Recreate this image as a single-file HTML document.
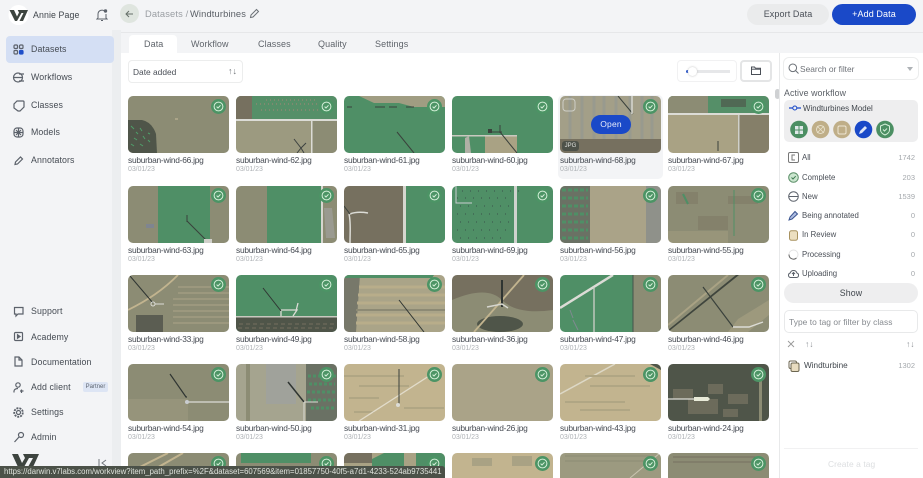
<!DOCTYPE html>
<html><head><meta charset="utf-8"><style>
*{box-sizing:border-box}
html,body{margin:0;padding:0;width:923px;height:478px;overflow:hidden;background:#f3f4f6;font-family:"Liberation Sans",sans-serif;color:#4a4f57}
#w{position:relative;width:923px;height:478px;overflow:hidden;background:#f3f4f6;filter:blur(.25px)}
.a{position:absolute}
.nav{position:absolute;left:31px;font-size:8.800px;color:#454b53;letter-spacing:.1px;white-space:nowrap}
.ic{position:absolute;left:12px;width:13px;height:13px;fill:none;stroke:#5c626b;stroke-width:1.2}
.th{position:absolute;width:101px;height:57px;border-radius:5px;overflow:hidden}
.th svg{display:block}
.r5{height:25px;border-radius:5px 5px 0 0}
.n{position:absolute;font-size:8.400px;letter-spacing:-.25px;color:#454a52;white-space:nowrap}
.d{position:absolute;font-size:7px;letter-spacing:-.05px;color:#aeb2b6;white-space:nowrap}
.b{position:absolute;width:15px;height:15px}
.tab{position:absolute;top:39px;font-size:9px;color:#5f646b;letter-spacing:.1px}
.st{position:absolute;left:802px;font-size:7.800px;color:#4a4f57;white-space:nowrap}
.ct{position:absolute;right:8px;font-size:7.500px;color:#a4a8ac}
.si{position:absolute;left:788px;width:11px;height:11px;fill:none;stroke:#5c626b;stroke-width:1}
</style></head><body><div id="w">
<svg width="0" height="0" style="position:absolute"><defs>
<g id="ck"><circle cx="7.500" cy="7.500" r="7.500" fill="#4c9465"/><circle cx="7.500" cy="7.500" r="4.400" fill="none" stroke="#d5efd9" stroke-width="1"/><path d="M5.600 7.600l1.400 1.400 2.500-2.700" fill="none" stroke="#d5efd9" stroke-width="1"/></g>
</defs></svg>

<!-- sidebar -->
<div class="a" style="left:112px;top:0;width:9px;height:478px;background:#eceef0"></div>
<div class="a" style="left:112px;top:0;width:9px;height:30px;background:#f3f4f6"></div>
<svg class="a" style="left:8px;top:5px" width="21" height="20" viewBox="0 0 21 20"><circle cx="10.500" cy="10" r="10" fill="#fff"/><path d="M1.500 5h4.500l3 6.500 2-4-1.300-2.500H20l-5 11h-3.500l4-8h-2l-4.500 8H7z" fill="#3d443f"/></svg>
<div class="a" style="left:33px;top:10px;font-size:8.800px;color:#40464c;letter-spacing:.1px">Annie Page</div>
<svg class="a" style="left:96px;top:8px" width="12" height="14" viewBox="0 0 12 14" fill="none" stroke="#5c626b" stroke-width="1"><path d="M2 10V6a4 4 0 0 1 7-2.500M10 6v4l1 1H1l1-1M5 12.500h2"/><circle cx="9.500" cy="3" r="1.200" fill="#5c626b"/></svg>
<div class="a" style="left:6px;top:36px;width:108px;height:27px;background:#d4dff4;border-radius:4px"></div>
<svg class="ic" style="top:43px" viewBox="0 0 13 13"><rect x="2" y="2" width="3.500" height="3.500" rx="1"/><rect x="7.500" y="2" width="3.500" height="3.500" rx="1"/><rect x="2" y="7.500" width="3.500" height="3.500" rx="1"/><rect x="7.500" y="7.500" width="3.500" height="3.500" rx="1" fill="#1f4fc9" stroke="#1f4fc9"/></svg>
<div class="nav" style="top:44px">Datasets</div>
<svg class="ic" style="top:71px" viewBox="0 0 13 13"><circle cx="6" cy="6.500" r="4.500"/><path d="M1 6.500h10M7 3h5M7 10h5"/></svg>
<div class="nav" style="top:72px">Workflows</div>
<svg class="ic" style="top:99px" viewBox="0 0 13 13"><path d="M5 2h6a1 1 0 0 1 1 1v5l-4 4H6L2 9V5z"/></svg>
<div class="nav" style="top:100px">Classes</div>
<svg class="ic" style="top:126px" viewBox="0 0 13 13"><rect x="2" y="2" width="9" height="9" rx="3"/><path d="M2 6.500h9M6.500 2v9M4 4l5 5M9 4l-5 5"/></svg>
<div class="nav" style="top:127px">Models</div>
<svg class="ic" style="top:154px" viewBox="0 0 13 13"><path d="M3 10.500l.5-2.500 5-5 2 2-5 5z"/></svg>
<div class="nav" style="top:155px">Annotators</div>
<svg class="ic" style="top:305px" viewBox="0 0 13 13"><path d="M2.500 2.500h8.500v6.500H6L4 11V9H2.500z"/></svg>
<div class="nav" style="top:306px">Support</div>
<svg class="ic" style="top:330px" viewBox="0 0 13 13"><rect x="2.500" y="2.500" width="8" height="8" rx="1"/><path d="M5.500 4.800l2.500 1.700-2.500 1.700z" fill="#5c626b"/></svg>
<div class="nav" style="top:332px">Academy</div>
<svg class="ic" style="top:355px" viewBox="0 0 13 13"><path d="M3 2h4l3 3v6H3z"/><path d="M7 2v3h3"/></svg>
<div class="nav" style="top:357px">Documentation</div>
<svg class="ic" style="top:381px" viewBox="0 0 13 13"><circle cx="6" cy="4" r="2.200"/><path d="M2 11.500V10c0-1.500 2-2.500 4-2.500M9.500 8.500v3.500M8 10h3.500"/></svg>
<div class="nav" style="top:382px">Add client</div>
<div class="a" style="left:83px;top:382px;width:25px;height:10px;border-radius:2px;background:#dde5f4;font-size:6px;color:#5d6570;text-align:center;line-height:10px">Partner</div>
<svg class="ic" style="top:406px" viewBox="0 0 13 13"><circle cx="6.500" cy="6.500" r="2"/><circle cx="6.500" cy="6.500" r="4.300" stroke-dasharray="2 1" stroke-width="1.800"/></svg>
<div class="nav" style="top:407px">Settings</div>
<svg class="ic" style="top:431px" viewBox="0 0 13 13"><circle cx="9" cy="4" r="2.500"/><path d="M7 6l-4.500 5"/></svg>
<div class="nav" style="top:432px">Admin</div>
<svg class="a" style="left:12px;top:454px" width="27" height="13" viewBox="0 0 27 13"><path d="M0 0h6l4 9 3-5-2-4h16l-6 13h-5l5-9h-4l-5 9H6z" fill="#3d443f"/></svg>
<svg class="a" style="left:97px;top:459px" width="11" height="8" viewBox="0 0 11 8" fill="none" stroke="#71767c" stroke-width="1"><path d="M2 0v8M9 1L5 4l4 3"/></svg>

<!-- header -->
<div class="a" style="left:120px;top:4px;width:19px;height:19px;border-radius:50%;background:#dfe5df"></div>
<svg class="a" style="left:125px;top:10px" width="9" height="8" viewBox="0 0 9 8" fill="none" stroke="#667069" stroke-width="1"><path d="M8 4H1M4 1L1 4l3 3"/></svg>
<div class="a" style="left:145px;top:9px;font-size:9.300px;color:#9a9ea3;white-space:nowrap;letter-spacing:.15px">Datasets /</div>
<div class="a" style="left:190px;top:9px;font-size:9.300px;color:#5a5f66;white-space:nowrap;letter-spacing:.15px">Windturbines</div>
<svg class="a" style="left:249px;top:8px" width="11" height="11" viewBox="0 0 11 11" fill="none" stroke="#6c7177" stroke-width="1"><path d="M1.500 9.500l.5-2.500 5.500-5.500 2 2L4 9z"/></svg>
<div class="a" style="left:747px;top:4px;width:82px;height:21px;border-radius:11px;background:#eaebec;font-size:9px;color:#4a4f57;text-align:center;line-height:21px;letter-spacing:.1px">Export Data</div>
<div class="a" style="left:832px;top:4px;width:84px;height:21px;border-radius:11px;background:#1a49c8;font-size:9px;color:#fff;text-align:center;line-height:21px;letter-spacing:.1px">+Add Data</div>

<!-- tabs + panel -->
<div class="a" style="left:121px;top:32px;width:802px;height:1px;background:#e6e7e9"></div>
<div class="a" style="left:121px;top:53px;width:659px;height:425px;background:#fff"></div>
<div class="a" style="left:129px;top:35px;width:48px;height:18px;background:#fff;border-radius:4px 4px 0 0"></div>
<div class="tab" style="left:144px">Data</div>
<div class="tab" style="left:191px">Workflow</div>
<div class="tab" style="left:258px">Classes</div>
<div class="tab" style="left:318px">Quality</div>
<div class="tab" style="left:375px">Settings</div>
<div class="a" style="left:128px;top:60px;width:115px;height:23px;border:1px solid #eceded;border-radius:4px;background:#fff"></div>
<div class="a" style="left:133px;top:67px;font-size:8.400px;color:#4a4f57">Date added</div>
<div class="a" style="left:228px;top:66px;font-size:9px;color:#6f7479">↑↓</div>
<div class="a" style="left:677px;top:60px;width:60px;height:22px;border:1px solid #f1f1f2;border-radius:4px"></div>
<div class="a" style="left:686px;top:70px;width:4px;height:3px;background:#1f4fc9;border-radius:2px"></div>
<div class="a" style="left:690px;top:70px;width:40px;height:3px;background:#e6e7e9"></div>
<div class="a" style="left:688px;top:67px;width:9px;height:9px;background:#fff;border-radius:50%;box-shadow:0 0 2px #bbb"></div>
<div class="a" style="left:740px;top:60px;width:32px;height:22px;border:2px solid #e4e5e6;border-radius:4px;background:#fff"></div>
<svg class="a" style="left:751px;top:66px" width="10" height="9" viewBox="0 0 10 9" fill="none" stroke="#4a4f57" stroke-width="1"><path d="M.5 1h3l1 1.200h5V8.500h-9z"/><path d="M.5 3.200h9"/></svg>
<div class="a" style="left:775px;top:89px;width:5px;height:10px;background:#cfd1d3;border-radius:3px"></div>

<!-- hover card -->
<div class="a" style="left:558px;top:95px;width:105px;height:84px;background:#f3f4f6;border-radius:5px"></div>

<!-- row 1 -->
<div class="th" style="left:128px;top:96px"><svg width="101" height="57"><rect width="101" height="57" fill="#8c8c74"/><path d="M0 24h14q10 2 14 14l1 19H0z" fill="#4f5549"/><path d="M3 30l3 3M8 36l2 2M12 32l2 3M6 42l3 2M15 40l2 3M20 44l2 2M3 48l3 2M12 48l3 2M20 37l2 1" stroke="#4f9f6a" stroke-width="1"/><rect x="47" y="22" width="3" height="2" fill="#aaa488"/></svg></div>
<div class="th" style="left:236px;top:96px"><svg width="101" height="57"><rect width="101" height="57" fill="#9c9a80"/><rect width="101" height="23" fill="#558f68"/><rect width="16" height="23" fill="#76705f"/><path d="M20 8h70M25 14h60M30 4h50" stroke="#7f8a70" stroke-width="2" stroke-dasharray="1 3"/><rect x="75" y="23" width="26" height="34" fill="#8c8c74"/><rect y="23" width="101" height="2" fill="#dcdcd6"/><rect x="75" y="23" width="1.500" height="34" fill="#dcdcd6"/><path d="M58 43l7 9 5-5M65 52l-4 5M65 52l3 5" stroke="#3d4240" stroke-width="1" fill="none"/></svg></div>
<div class="th" style="left:344px;top:96px"><svg width="101" height="57"><rect width="101" height="57" fill="#4f8f66"/><path d="M15 0h86v11H70l-15-4H30z" fill="#a09d82"/><path d="M3 11h5M31 11h10M45 11h8M62 11h8" stroke="#3a413c" stroke-width="1"/><path d="M53 36l17 21" stroke="#3a413c" stroke-width="1"/></svg></div>
<div class="th" style="left:452px;top:96px"><svg width="101" height="57"><rect width="101" height="57" fill="#4f8f66"/><path d="M33 40h32v17H33z" fill="#a9a284"/><rect y="39" width="65" height="1.500" fill="#c9c9c0"/><path d="M13 42l4-2 2 17h-6z" fill="#b0b0a6"/><path d="M48 36l17 21" stroke="#3a413c" stroke-width="1"/><path d="M48 29v8M38 36h12" stroke="#3a413c" stroke-width="1"/><rect x="36" y="33" width="4" height="4" fill="#3a413c"/></svg></div>
<div class="th" style="left:560px;top:96px"><svg width="101" height="57"><rect width="101" height="57" fill="#a39f88"/><path d="M10 0v43M22 0v43M34 0v43M44 0v43M56 0v43M70 0v43M82 0v43M92 0v43" stroke="#989a8e" stroke-width="3"/><path d="M58 0l15 18" stroke="#3a413c" stroke-width="1"/><path d="M72 0v18" stroke="#d8d8d0" stroke-width="1.500"/><rect y="43" width="101" height="14" fill="#76705f"/><rect x="3" y="3" width="12" height="12" rx="3" fill="none" stroke="#cfcfc8"/></svg>
<div class="a" style="left:2px;top:45px;width:17px;height:10px;border-radius:3px;background:#4d5149;color:#dfe0dc;font-size:6px;text-align:center;line-height:10px">JPG</div>
<div class="a" style="left:31px;top:19px;width:40px;height:19px;border-radius:10px;background:#1a49c8;color:#e6ecfa;font-size:8.500px;text-align:center;line-height:19px;letter-spacing:.2px">Open</div></div>
<div class="th" style="left:668px;top:96px"><svg width="101" height="57"><rect width="101" height="57" fill="#a9a284"/><rect width="101" height="17" fill="#558f68"/><rect width="40" height="17" fill="#8c8c74"/><path d="M53 3h25v8H53z" fill="#4c5048" opacity=".6"/><rect x="71" y="19" width="30" height="38" fill="#857f69"/><rect y="17" width="101" height="2" fill="#dcdcd6"/><rect x="70" y="19" width="1.500" height="38" fill="#cfd0ca"/><path d="M50 45v10" stroke="#3a413c"/></svg></div>
<div class="n" style="left:128px;top:155px">suburban-wind-66.jpg</div><div class="d" style="left:128px;top:166px">03/01/23</div>
<div class="n" style="left:236px;top:155px">suburban-wind-62.jpg</div><div class="d" style="left:236px;top:166px">03/01/23</div>
<div class="n" style="left:344px;top:155px">suburban-wind-61.jpg</div><div class="d" style="left:344px;top:166px">03/01/23</div>
<div class="n" style="left:452px;top:155px">suburban-wind-60.jpg</div><div class="d" style="left:452px;top:166px">03/01/23</div>
<div class="n" style="left:560px;top:155px">suburban-wind-68.jpg</div><div class="d" style="left:560px;top:166px">03/01/23</div>
<div class="n" style="left:668px;top:155px">suburban-wind-67.jpg</div><div class="d" style="left:668px;top:166px">03/01/23</div>

<!-- row 2 -->
<div class="th" style="left:128px;top:186px"><svg width="101" height="57"><rect width="101" height="57" fill="#8c8c74"/><rect x="30" width="52" height="57" fill="#4f8f66"/><path d="M59 35l20 20" stroke="#3a413c" stroke-width="1"/><path d="M59 29v7" stroke="#3a413c"/><rect x="76" y="53" width="8" height="4" fill="#d0d0ca"/><rect x="18" y="38" width="8" height="4" fill="#7f8590"/></svg></div>
<div class="th" style="left:236px;top:186px"><svg width="101" height="57"><rect width="101" height="57" fill="#8c8c74"/><rect x="31" width="54" height="57" fill="#4f8f66"/><rect x="85" width="2" height="57" fill="#d6d6cf"/><path d="M88 22h8l3 30H90z" fill="#9a9a90"/></svg></div>
<div class="th" style="left:344px;top:186px"><svg width="101" height="57"><rect width="101" height="57" fill="#76705f"/><rect x="61" width="40" height="57" fill="#4f8f66"/><rect x="59" width="3" height="57" fill="#d6d6cf"/><path d="M5 28c2 8 1 18 1 29M6 28c5-2 12-2 18-1" stroke="#dcdcd6" stroke-width="1.500" fill="none"/><path d="M0 20l6 8" stroke="#3a413c"/></svg></div>
<div class="th" style="left:452px;top:186px"><svg width="101" height="57"><rect width="101" height="57" fill="#4f8f66"/><path d="M10 5h60M5 12h55M8 20h50M5 28h50M8 36h50M5 44h52M8 52h48" stroke="#39524a" stroke-dasharray="1 7" stroke-width="1"/><rect x="62" width="3" height="57" fill="#cfd2cd"/><path d="M4 0v17h16" stroke="#c8cdd0" stroke-width="1" fill="none"/></svg></div>
<div class="th" style="left:560px;top:186px"><svg width="101" height="57"><rect width="101" height="57" fill="#aaa388"/><rect width="30" height="57" fill="#6a7164"/><path d="M2 4h26M2 12h26M2 20h26M2 28h26M2 36h26M2 44h26M2 52h26" stroke="#4f8f66" stroke-width="3" stroke-dasharray="4 2"/><rect x="86" width="15" height="57" fill="#8f918a"/></svg></div>
<div class="th" style="left:668px;top:186px"><svg width="101" height="57"><rect width="101" height="57" fill="#8c8c74"/><path d="M8 6h22v12H8zM30 30h30v14H30zM60 10h30v8H60z" fill="#807c68" opacity=".7"/><path d="M66 4v46" stroke="#4f8f66"/><path d="M15 8l5 10" stroke="#4f8f66" stroke-width="2"/><path d="M0 45h60v12H0z" fill="#a9a284" opacity=".4"/></svg></div>
<div class="n" style="left:128px;top:245px">suburban-wind-63.jpg</div><div class="d" style="left:128px;top:256px">03/01/23</div>
<div class="n" style="left:236px;top:245px">suburban-wind-64.jpg</div><div class="d" style="left:236px;top:256px">03/01/23</div>
<div class="n" style="left:344px;top:245px">suburban-wind-65.jpg</div><div class="d" style="left:344px;top:256px">03/01/23</div>
<div class="n" style="left:452px;top:245px">suburban-wind-69.jpg</div><div class="d" style="left:452px;top:256px">03/01/23</div>
<div class="n" style="left:560px;top:245px">suburban-wind-56.jpg</div><div class="d" style="left:560px;top:256px">03/01/23</div>
<div class="n" style="left:668px;top:245px">suburban-wind-55.jpg</div><div class="d" style="left:668px;top:256px">03/01/23</div>

<!-- row 3 -->
<div class="th" style="left:128px;top:275px"><svg width="101" height="57"><rect width="101" height="57" fill="#8c8c74"/><path d="M45 24H101M45 30H101M45 36H101M45 42H101M45 48H101M50 12H101M50 18H101" stroke="#9c987e" stroke-width="2"/><path d="M8 40h27v17H8z" fill="#5b5d52"/><path d="M0 35C20 25 35 15 50 0" stroke="#c2b48f" stroke-width="1.800" fill="none"/><path d="M2 1l23 27" stroke="#2f3532" stroke-width="1"/><circle cx="25" cy="29" r="2" fill="none" stroke="#dcdcd6"/><path d="M27 29h9" stroke="#dcdcd6"/></svg></div>
<div class="th" style="left:236px;top:275px"><svg width="101" height="57"><rect width="101" height="57" fill="#4f8f66"/><rect y="41" width="101" height="16" fill="#4f5549"/><path d="M3 49h95M2 53h95" stroke="#76705f" stroke-dasharray="4 3"/><rect y="41" width="101" height="1.500" fill="#c9c9c0"/><path d="M27 13l18 23" stroke="#2f3532" stroke-width="1"/><path d="M45 36v5M45 35h16l-4 6M62 28l-2 8" stroke="#dcdcd6" stroke-width="1.300" fill="none"/></svg></div>
<div class="th" style="left:344px;top:275px"><svg width="101" height="57"><rect width="101" height="57" fill="#aaa488"/><path d="M0 0h16l-4 57H0z" fill="#77786a"/><path d="M15 12h86M14 20h87M13 28h88M12 40h89M12 48h89" stroke="#b8ad8a" stroke-width="3"/><path d="M12 35h89" stroke="#8d8a74" stroke-width="2"/><path d="M55 25l25 32" stroke="#2f3532" stroke-width="1"/><path d="M0 0h90l-2 3H0z" fill="#4f8f66"/></svg></div>
<div class="th" style="left:452px;top:275px"><svg width="101" height="57"><rect width="101" height="57" fill="#76705f"/><path d="M0 25q35-15 50 0t51 10v22H0z" fill="#8c8c74"/><ellipse cx="48" cy="49" rx="23" ry="8" fill="#4f5549"/><path d="M22 57l50-57" stroke="#c2b48f" stroke-width="1.800"/><path d="M50 5v27" stroke="#2f3532" stroke-width="2"/><path d="M35 32l15-3 6 4" stroke="#d6d6cf" stroke-width="1.500" fill="none"/></svg></div>
<div class="th" style="left:560px;top:275px"><svg width="101" height="57"><rect width="101" height="57" fill="#4f8f66"/><rect x="73" width="28" height="57" fill="#8c8c74"/><path d="M0 33L53 0" stroke="#dcdcd6" stroke-width="2.500"/><path d="M34 12v45" stroke="#cfd0ca" stroke-width="1.300"/><path d="M73 0v57" stroke="#45534c"/><path d="M10 35l3 8M13 45l5 10" stroke="#7f8a90"/></svg></div>
<div class="th" style="left:668px;top:275px"><svg width="101" height="57"><rect width="101" height="57" fill="#8c8c74"/><path d="M0 55L68 0h3L0 57z" fill="#3f453d"/><path d="M0 50L60 0" stroke="#a9a284" stroke-width="2"/><path d="M70 44L101 25v15L80 57H60z" fill="#a9a284" opacity=".6"/><path d="M35 12l30 40" stroke="#3a413c" stroke-width="1.200"/><path d="M65 52h16l14-5" stroke="#dcdcd6" stroke-width="1.400" fill="none"/></svg></div>
<div class="n" style="left:128px;top:334px">suburban-wind-33.jpg</div><div class="d" style="left:128px;top:345px">03/01/23</div>
<div class="n" style="left:236px;top:334px">suburban-wind-49.jpg</div><div class="d" style="left:236px;top:345px">03/01/23</div>
<div class="n" style="left:344px;top:334px">suburban-wind-58.jpg</div><div class="d" style="left:344px;top:345px">03/01/23</div>
<div class="n" style="left:452px;top:334px">suburban-wind-36.jpg</div><div class="d" style="left:452px;top:345px">03/01/23</div>
<div class="n" style="left:560px;top:334px">suburban-wind-47.jpg</div><div class="d" style="left:560px;top:345px">03/01/23</div>
<div class="n" style="left:668px;top:334px">suburban-wind-46.jpg</div><div class="d" style="left:668px;top:345px">03/01/23</div>

<!-- row 4 -->
<div class="th" style="left:128px;top:364px"><svg width="101" height="57"><rect width="101" height="57" fill="#8c8c74"/><path d="M0 35h60v22H0z" fill="#9c9a80" opacity=".6"/><path d="M42 10l16 23 1 0" stroke="#2f3532" stroke-width="1.200" fill="none"/><path d="M58 38h43" stroke="#dcdcd6" stroke-width="1.300"/><circle cx="59" cy="38" r="2" fill="#c9ccd0"/></svg></div>
<div class="th" style="left:236px;top:364px"><svg width="101" height="57"><rect width="101" height="57" fill="#a5a48f"/><rect x="10" width="4" height="57" fill="#8c8c74"/><path d="M30 0h30v40H30z" fill="#a0a29b"/><rect x="70" width="31" height="57" fill="#6a7164"/><path d="M72 12h28M73 20h26M71 28h28M72 36h27M75 44h24" stroke="#4f8f66" stroke-width="3" stroke-dasharray="3 2"/><path d="M52 18l16 20" stroke="#2f3532" stroke-width="1.500"/><path d="M68 38h14M68 38v19" stroke="#dcdcd6"/></svg></div>
<div class="th" style="left:344px;top:364px"><svg width="101" height="57"><rect width="101" height="57" fill="#c2b48f"/><path d="M0 12h60M15 22h50M5 34h30M60 44h40M10 48h20" stroke="#b0a684" stroke-width="2"/><path d="M15 57L85 12" stroke="#e2dccb" stroke-width="1.300"/><path d="M55 5v35" stroke="#3a413c" stroke-width="1"/><circle cx="54" cy="41" r="2" fill="#dcdcd6"/></svg></div>
<div class="th" style="left:452px;top:364px"><svg width="101" height="57"><rect width="101" height="57" fill="#aaa388"/></svg></div>
<div class="th" style="left:560px;top:364px"><svg width="101" height="57"><rect width="101" height="57" fill="#c2b48f"/><path d="M0 30L55 0" stroke="#ddd8c6" stroke-width="1.500"/><path d="M25 12h50M30 22h60M5 38h60M20 46h50" stroke="#b0a684" stroke-width="2"/><path d="M90 0h11v6z" fill="#4f5549"/></svg></div>
<div class="th" style="left:668px;top:364px"><svg width="101" height="57"><rect width="101" height="57" fill="#4f5549"/><path d="M5 25h20v10H5zM20 35h30v15H20zM40 20h15v10H40zM60 30h20v10H60zM55 45h15v8H55z" fill="#6c6b5b"/><path d="M0 35h40" stroke="#dcdcd6" stroke-width="1.300"/><path d="M26 33h14l2 2-2 2H26z" fill="#e8ead8"/><rect x="91" y="16" width="3" height="41" fill="#8c8c74"/></svg></div>
<div class="n" style="left:128px;top:423px">suburban-wind-54.jpg</div><div class="d" style="left:128px;top:434px">03/01/23</div>
<div class="n" style="left:236px;top:423px">suburban-wind-50.jpg</div><div class="d" style="left:236px;top:434px">03/01/23</div>
<div class="n" style="left:344px;top:423px">suburban-wind-31.jpg</div><div class="d" style="left:344px;top:434px">03/01/23</div>
<div class="n" style="left:452px;top:423px">suburban-wind-26.jpg</div><div class="d" style="left:452px;top:434px">03/01/23</div>
<div class="n" style="left:560px;top:423px">suburban-wind-43.jpg</div><div class="d" style="left:560px;top:434px">03/01/23</div>
<div class="n" style="left:668px;top:423px">suburban-wind-24.jpg</div><div class="d" style="left:668px;top:434px">03/01/23</div>

<!-- row 5 -->
<div class="th r5" style="left:128px;top:453px"><svg width="101" height="25"><rect width="101" height="25" fill="#8c8c74"/><path d="M0 20L40 0M20 20L55 0" stroke="#c2b48f" stroke-width="2"/></svg></div>
<div class="th r5" style="left:236px;top:453px"><svg width="101" height="25"><rect width="101" height="25" fill="#8c8c74"/><path d="M5 0h70v10H5z" fill="#4f8f66"/></svg></div>
<div class="th r5" style="left:344px;top:453px"><svg width="101" height="25"><rect width="101" height="25" fill="#a9a284"/><rect width="28" height="10" fill="#76705f"/><path d="M28 6L40 0h20v15H28z" fill="#4f8f66"/><path d="M72 0h29v25H72z" fill="#4f8f66"/></svg></div>
<div class="th r5" style="left:452px;top:453px"><svg width="101" height="25"><rect width="101" height="25" fill="#c2b48f"/><path d="M20 5h20v8H20zM60 3h20v10H60z" fill="#a9a284"/></svg></div>
<div class="th r5" style="left:560px;top:453px"><svg width="101" height="25"><rect width="101" height="25" fill="#9c9a80"/><path d="M5 3h85M5 8h85" stroke="#8c8c74"/><path d="M70 25L100 0" stroke="#c9c4b0"/></svg></div>
<div class="th r5" style="left:668px;top:453px"><svg width="101" height="25"><rect width="101" height="25" fill="#8c8c74"/><path d="M5 4h85M5 9h85" stroke="#76705f"/></svg></div>

<!-- check badges -->
<svg class="b" style="left:211px;top:99px"><use href="#ck"/></svg><svg class="b" style="left:319px;top:99px"><use href="#ck"/></svg><svg class="b" style="left:427px;top:99px"><use href="#ck"/></svg><svg class="b" style="left:535px;top:99px"><use href="#ck"/></svg><svg class="b" style="left:643px;top:99px"><use href="#ck"/></svg><svg class="b" style="left:751px;top:99px"><use href="#ck"/></svg>
<svg class="b" style="left:211px;top:188px"><use href="#ck"/></svg><svg class="b" style="left:319px;top:188px"><use href="#ck"/></svg><svg class="b" style="left:427px;top:188px"><use href="#ck"/></svg><svg class="b" style="left:535px;top:188px"><use href="#ck"/></svg><svg class="b" style="left:643px;top:188px"><use href="#ck"/></svg><svg class="b" style="left:751px;top:188px"><use href="#ck"/></svg>
<svg class="b" style="left:211px;top:277px"><use href="#ck"/></svg><svg class="b" style="left:319px;top:277px"><use href="#ck"/></svg><svg class="b" style="left:427px;top:277px"><use href="#ck"/></svg><svg class="b" style="left:535px;top:277px"><use href="#ck"/></svg><svg class="b" style="left:643px;top:277px"><use href="#ck"/></svg><svg class="b" style="left:751px;top:277px"><use href="#ck"/></svg>
<svg class="b" style="left:211px;top:367px"><use href="#ck"/></svg><svg class="b" style="left:319px;top:367px"><use href="#ck"/></svg><svg class="b" style="left:427px;top:367px"><use href="#ck"/></svg><svg class="b" style="left:535px;top:367px"><use href="#ck"/></svg><svg class="b" style="left:643px;top:367px"><use href="#ck"/></svg><svg class="b" style="left:751px;top:367px"><use href="#ck"/></svg>
<svg class="b" style="left:211px;top:456px"><use href="#ck"/></svg><svg class="b" style="left:319px;top:456px"><use href="#ck"/></svg><svg class="b" style="left:427px;top:456px"><use href="#ck"/></svg><svg class="b" style="left:535px;top:456px"><use href="#ck"/></svg><svg class="b" style="left:643px;top:456px"><use href="#ck"/></svg><svg class="b" style="left:751px;top:456px"><use href="#ck"/></svg>

<!-- right panel -->
<div class="a" style="left:779px;top:53px;width:144px;height:425px;background:#fff;border-left:1px solid #e8e9ea"></div>
<div class="a" style="left:783px;top:57px;width:136px;height:23px;border:1px solid #eceded;border-radius:6px"></div>
<svg class="a" style="left:788px;top:63px" width="11" height="11" viewBox="0 0 11 11" fill="none" stroke="#6c7177" stroke-width="1"><circle cx="4.800" cy="4.800" r="3.800"/><path d="M7.500 7.500l3 3"/></svg>
<div class="a" style="left:800px;top:64px;font-size:8.400px;color:#6f7379">Search or filter</div>
<div class="a" style="left:907px;top:67px;width:0;height:0;border:3px solid transparent;border-top:4px solid #aeb2b6"></div>
<div class="a" style="left:784px;top:88px;font-size:8.800px;color:#5a5f66;letter-spacing:.1px">Active workflow</div>
<div class="a" style="left:784px;top:100px;width:134px;height:42px;background:#eeeeef;border-radius:5px"></div>
<svg class="a" style="left:789px;top:104px" width="12" height="8" viewBox="0 0 12 8" fill="none" stroke="#1a49c8" stroke-width="1"><path d="M0 4h3.500M8 4h4" stroke-width="1.200"/><circle cx="5.800" cy="4" r="2"/></svg>
<div class="a" style="left:803px;top:104px;font-size:7.900px;color:#40464c;white-space:nowrap">Windturbines Model</div>
<svg class="a" style="left:790px;top:120px" width="106" height="19" viewBox="0 0 106 19">
<circle cx="9" cy="9.500" r="8.800" fill="#4c8f63"/><g fill="#dfe8e9"><rect x="5" y="6" width="3.500" height="3.500"/><rect x="9.500" y="6" width="3.500" height="3.500"/><rect x="5" y="10.500" width="3.500" height="3.500"/><rect x="9.500" y="10.500" width="3.500" height="3.500"/></g>
<circle cx="30.500" cy="9.500" r="8.800" fill="#bfae88"/><circle cx="30.500" cy="9.500" r="4" fill="none" stroke="#e7dfc9"/><path d="M27 6l7 7M34 6l-7 7" stroke="#e7dfc9" stroke-width=".8"/>
<circle cx="52" cy="9.500" r="8.800" fill="#bfae88"/><rect x="48" y="6" width="8" height="8" rx="1.500" fill="none" stroke="#eee6d3"/>
<circle cx="73.500" cy="9.500" r="8.800" fill="#1a49c8"/><path d="M69 14l1-3 5-5 2 2-5 5z" fill="#dfe6f8"/>
<circle cx="95" cy="9.500" r="8.800" fill="#4c8f63"/><path d="M95 4l4.500 2v4c0 2-2 4-4.500 5-2.500-1-4.500-3-4.500-5V6z" fill="none" stroke="#d5efd9"/><path d="M93 9.500l1.500 1.500 2.500-2.500" fill="none" stroke="#d5efd9"/></svg>

<svg class="si" style="top:152px" viewBox="0 0 11 11"><rect x=".5" y=".5" width="10" height="10" rx="1.500" stroke="#777"/><path d="M7 3H4v5h3" stroke="#777"/></svg>
<div class="st" style="top:153px">All</div><div class="ct" style="top:153px">1742</div>
<svg class="si" style="top:172px" viewBox="0 0 11 11"><circle cx="5.500" cy="5.500" r="4.800" fill="#cbe6cf" stroke="#5b8f68"/><path d="M3.500 5.500l1.500 1.500 2.700-2.800" stroke="#3e7a50"/></svg>
<div class="st" style="top:173px">Complete</div><div class="ct" style="top:173px">203</div>
<svg class="si" style="top:191px" viewBox="0 0 11 11"><circle cx="5.500" cy="5.500" r="4.800"/><path d="M.7 5.500h9.600"/></svg>
<div class="st" style="top:192px">New</div><div class="ct" style="top:192px">1539</div>
<svg class="si" style="top:210px" viewBox="0 0 11 11"><path d="M1 10l1-3 5-5.500 2.500 2.500L4 9z" fill="#aebde2" stroke="#3c5590"/></svg>
<div class="st" style="top:211px">Being annotated</div><div class="ct" style="top:211px">0</div>
<svg class="si" style="top:230px" viewBox="0 0 11 11"><rect x="1.500" y=".8" width="8" height="9.500" rx="2" fill="#ecdfc0" stroke="#a8925f"/></svg>
<div class="st" style="top:230px">In Review</div><div class="ct" style="top:230px">0</div>
<svg class="si" style="top:249px" viewBox="0 0 11 11"><circle cx="5.500" cy="5.500" r="4.500" stroke="#e3e3e3"/><path d="M1 5.500a4.500 4.500 0 0 0 7.500 3.500" stroke="#666"/></svg>
<div class="st" style="top:250px">Processing</div><div class="ct" style="top:250px">0</div>
<svg class="si" style="top:268px" viewBox="0 0 11 11"><path d="M2.500 9.500a2.300 2.300 0 0 1-.3-4.500 3.500 3.500 0 0 1 6.700 0 2.300 2.300 0 0 1-.3 4.500zM5.500 8V4.500M4 6l1.500-1.500L7 6"/></svg>
<div class="st" style="top:269px">Uploading</div><div class="ct" style="top:269px">0</div>
<div class="a" style="left:784px;top:283px;width:134px;height:20px;border-radius:10px;background:#eeeeef;font-size:8.800px;color:#40464c;text-align:center;line-height:20px;letter-spacing:.1px">Show</div>
<div class="a" style="left:784px;top:310px;width:134px;height:23px;border:1px solid #e8e9ea;border-radius:5px"></div>
<div class="a" style="left:789px;top:317px;font-size:8.400px;color:#85898e;letter-spacing:.05px;white-space:nowrap">Type to tag or filter by class</div>
<svg class="a" style="left:787px;top:340px" width="8" height="8" viewBox="0 0 8 8" stroke="#999" stroke-width=".9"><path d="M1 1l6 6M7 1L1 7"/></svg>
<div class="a" style="left:805px;top:339px;font-size:8.500px;color:#8b9095">↑↓</div>
<div class="a" style="left:906px;top:339px;font-size:8.500px;color:#8b9095">↑↓</div>
<svg class="a" style="left:788px;top:360px" width="12" height="12" viewBox="0 0 12 12" fill="none"><rect x="1" y="1" width="7.500" height="7.500" rx="1.500" stroke="#6c6650"/><rect x="3" y="3" width="8" height="8.500" rx="1.500" fill="#e8dcc0" stroke="#6c6650"/></svg>
<div class="a" style="left:804px;top:361px;font-size:8.200px;color:#40464c">Windturbine</div>
<div class="ct" style="top:361px;right:8px">1302</div>
<div class="a" style="left:784px;top:448px;width:134px;height:1px;background:#f1f1f2"></div>
<div class="a" style="left:828px;top:459px;font-size:8.400px;color:#dcdee0;letter-spacing:.1px">Create a tag</div>

<!-- status -->
<div class="a" style="left:0;top:466px;width:445px;height:12px;background:#4b5148;border-radius:0 3px 0 0;font-size:7.800px;color:#dfe3dc;line-height:12px;padding-left:4px;white-space:nowrap;overflow:hidden">https://darwin.v7labs.com/workview?item_path_prefix=%2F&amp;dataset=607569&amp;item=01857750-40f5-a7d1-4233-524ab9735441</div>
</div></body></html>
